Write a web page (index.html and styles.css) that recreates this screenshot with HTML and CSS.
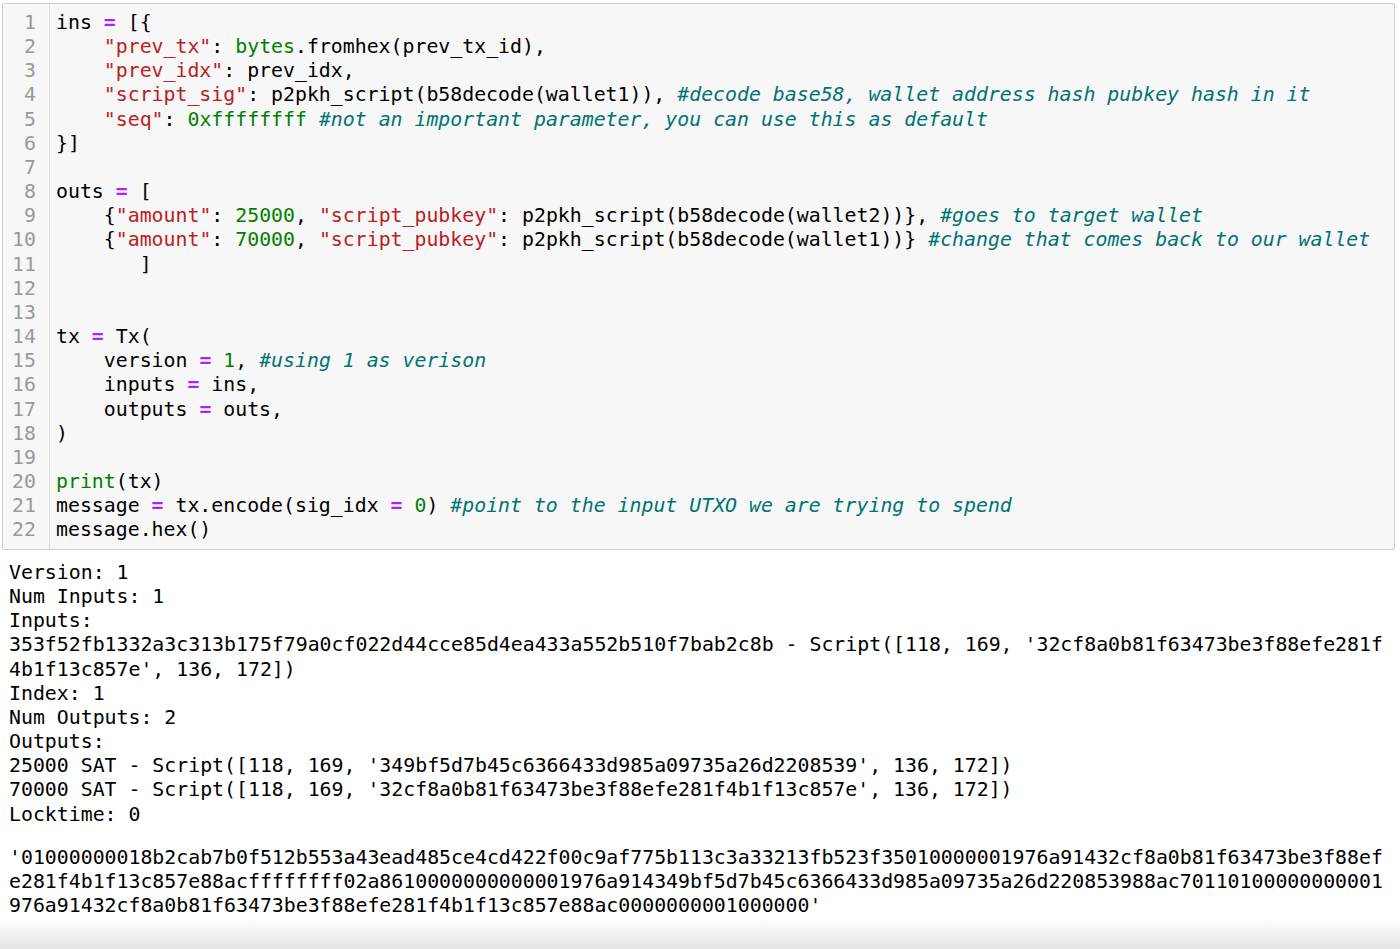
FILE: index.html
```html
<!DOCTYPE html>
<html>
<head>
<meta charset="utf-8">
<link rel="stylesheet" href="styles.css">
</head>
<body>
<div class="cell">
<pre class="gutter">1
2
3
4
5
6
7
8
9
10
11
12
13
14
15
16
17
18
19
20
21
22</pre>
<pre class="code">ins <span class="o">=</span> [{
    <span class="s">"prev_tx"</span>: <span class="b">bytes</span>.fromhex(prev_tx_id),
    <span class="s">"prev_idx"</span>: prev_idx,
    <span class="s">"script_sig"</span>: p2pkh_script(b58decode(wallet1)), <span class="c">#decode base58, wallet address hash pubkey hash in it</span>
    <span class="s">"seq"</span>: <span class="n">0xffffffff</span> <span class="c">#not an important parameter, you can use this as default</span>
}]

outs <span class="o">=</span> [
    {<span class="s">"amount"</span>: <span class="n">25000</span>, <span class="s">"script_pubkey"</span>: p2pkh_script(b58decode(wallet2))}, <span class="c">#goes to target wallet</span>
    {<span class="s">"amount"</span>: <span class="n">70000</span>, <span class="s">"script_pubkey"</span>: p2pkh_script(b58decode(wallet1))} <span class="c">#change that comes back to our wallet</span>
       ]


tx <span class="o">=</span> Tx(
    version <span class="o">=</span> <span class="n">1</span>, <span class="c">#using 1 as verison</span>
    inputs <span class="o">=</span> ins,
    outputs <span class="o">=</span> outs,
)

<span class="b">print</span>(tx)
message <span class="o">=</span> tx.encode(sig_idx <span class="o">=</span> <span class="n">0</span>) <span class="c">#point to the input UTXO we are trying to spend</span>
message.hex()</pre>
</div>
<pre class="out">Version: 1
Num Inputs: 1
Inputs:
353f52fb1332a3c313b175f79a0cf022d44cce85d4ea433a552b510f7bab2c8b - Script([118, 169, '32cf8a0b81f63473be3f88efe281f
4b1f13c857e', 136, 172])
Index: 1
Num Outputs: 2
Outputs:
25000 SAT - Script([118, 169, '349bf5d7b45c6366433d985a09735a26d2208539', 136, 172])
70000 SAT - Script([118, 169, '32cf8a0b81f63473be3f88efe281f4b1f13c857e', 136, 172])
Locktime: 0</pre>
<pre class="out result">'01000000018b2cab7b0f512b553a43ead485ce4cd422f00c9af775b113c3a33213fb523f35010000001976a91432cf8a0b81f63473be3f88ef
e281f4b1f13c857e88acffffffff02a8610000000000001976a914349bf5d7b45c6366433d985a09735a26d220853988ac70110100000000001
976a91432cf8a0b81f63473be3f88efe281f4b1f13c857e88ac0000000001000000'</pre>
<div class="fade"></div>
</body>
</html>
```
FILE: styles.css
```css
html, body {
  margin: 0;
  padding: 0;
  background: #ffffff;
}
body {
  font-family: "DejaVu Sans Mono", "Liberation Mono", monospace;
  font-size: 19.85px;
  line-height: 24.15px;
  color: #000;
  overflow: hidden;
  height: 949px;
  display: flex;
  flex-direction: column;
}
pre {
  margin: 0;
  font: inherit;
  white-space: pre;
}
.cell {
  display: flex;
  flex: none;
  margin: 3px 5px 0 2px;
  border: 1px solid #cfcfcf;
  border-radius: 2px;
  background: #f7f7f7;
  height: 547px;
  box-sizing: border-box;
}
.gutter {
  width: 47px;
  box-sizing: border-box;
  padding: 7px 13px 0 0;
  text-align: right;
  color: #999999;
  border-right: 1px solid #dddddd;
}
.code {
  padding: 7px 0 0 6px;
}
.o { color: #aa22ff; font-weight: bold; }
.s { color: #ba2121; }
.n { color: #008000; }
.b { color: #008000; }
.c { color: #007373; font-style: italic; }
.out {
  flex: none;
  padding-left: 9px;
  margin-top: 11px;
}
.result {
  margin-top: 19px;
}
.fade {
  flex: 1;
  background: linear-gradient(#ffffff, #e4e4e4);
}
```
